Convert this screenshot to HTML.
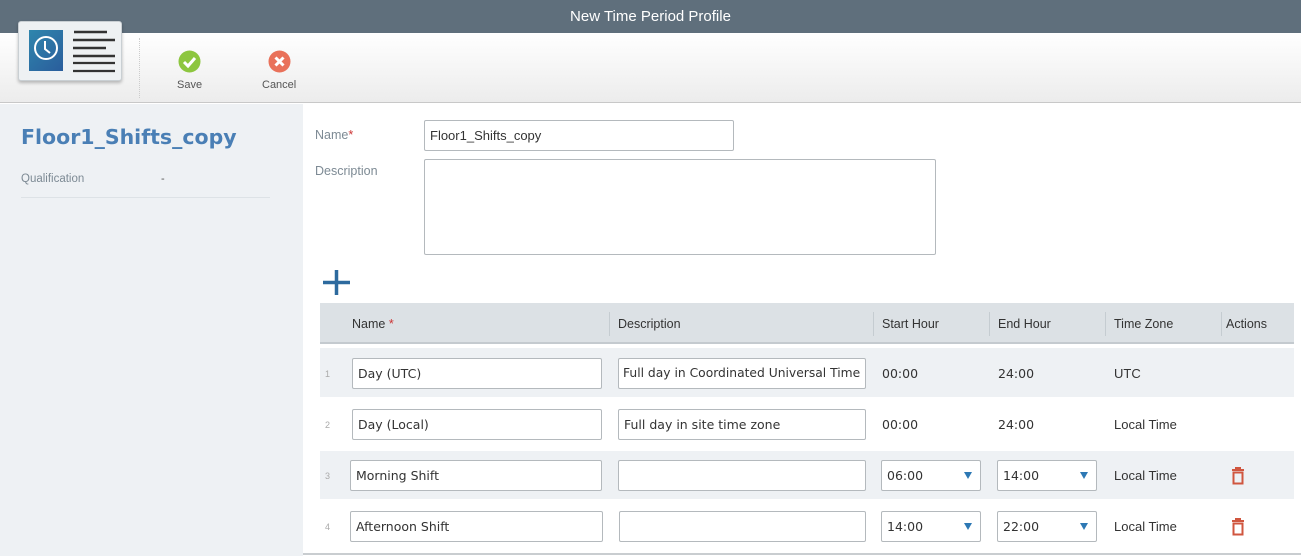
<!DOCTYPE html>
<html><head><style>
*{box-sizing:border-box;margin:0;padding:0}
body{width:1301px;height:556px;overflow:hidden;font-family:"Liberation Sans",Tahoma,sans-serif;background:#fff;position:relative}
.abs{position:absolute}
.title{left:0;top:0;width:1301px;height:33px;background:#5f6f7c;color:#fff;font-size:15px;text-align:center;line-height:33px}
.tb{left:0;top:33px;width:1301px;height:70px;background:linear-gradient(#fff,#ececec);border-bottom:1px solid #c8c8c8}
.left{left:0;top:104px;width:303px;height:452px;background:#eef1f4}
.inp{position:absolute;background:#fff;border:1px solid #b4b9bd;border-radius:2px;font-family:"DejaVu Sans",sans-serif;font-size:12.5px;color:#333;padding-left:5px;line-height:29px;white-space:nowrap;overflow:hidden}
.lbl{position:absolute;font-size:12.5px;color:#7d8a94}
.hdr{position:absolute;font-size:12.5px;color:#333}
.sep{position:absolute;top:312px;width:1px;height:24px;background:#c5ccd1}
.cell{position:absolute;font-family:"DejaVu Sans",sans-serif;font-size:12.5px;color:#333}
.tz{position:absolute;font-size:13px;color:#333}
.num{position:absolute;left:325px;font-size:9px;color:#aaa}
.arr{position:absolute;right:8px;top:11px;width:0;height:0;border-left:4px solid transparent;border-right:4px solid transparent;border-top:7px solid #2d78b4}
</style></head><body>
<div class="abs title">New Time Period Profile</div>
<div class="abs tb"></div>
<div class="abs" style="left:18px;top:21px;width:104px;height:60px;background:#eef1f3;border:1px solid #c9cfd3;border-radius:3px;box-shadow:0 2px 3px rgba(0,0,0,.25)">
 <div class="abs" style="left:10px;top:8px;width:34px;height:41px;background:linear-gradient(135deg,#2f86ad,#2a5d9c)"></div>
 <svg class="abs" style="left:10px;top:8px" width="34" height="41"><circle cx="17" cy="18" r="11" fill="none" stroke="#fff" stroke-width="2"/><path d="M16 11v8l5 4" stroke="#fff" stroke-width="2" fill="none"/></svg>
 <svg class="abs" style="left:52px;top:8px" width="44" height="44"><g stroke="#333" stroke-width="2.4"><path d="M3 2h33M2 10h42M2 18h33M2 26h42"/></g><path d="M2 33h42M2 41h42" stroke="#333" stroke-width="2.2"/></svg>
</div>
<div class="abs" style="left:139px;top:38px;width:1px;height:60px;border-left:1px dotted #ccc"></div>
<svg class="abs" style="left:178px;top:50px" width="23" height="23"><circle cx="11.5" cy="11.5" r="11" fill="#8dc63f"/><path d="M6 12l4 4 7-8" stroke="#fff" stroke-width="3" fill="none"/></svg>
<div class="abs" style="left:177px;top:79px;font-size:11px;color:#555">Save</div>
<svg class="abs" style="left:268px;top:50px" width="23" height="23"><circle cx="11.5" cy="11.5" r="11" fill="#e9715a"/><path d="M7.5 7.5l8 8M15.5 7.5l-8 8" stroke="#fff" stroke-width="3"/></svg>
<div class="abs" style="left:262px;top:79px;font-size:11px;color:#555">Cancel</div>
<div class="abs left"></div>
<div class="abs" style="left:21px;top:125px;font-family:'DejaVu Sans',sans-serif;font-weight:bold;font-size:20.5px;color:#4a7fb5">Floor1_Shifts_copy</div>
<div class="lbl" style="left:21px;top:173px;font-size:11.5px">Qualification</div>
<div class="abs" style="left:161px;top:173px;font-size:11px;color:#555">-</div>
<div class="abs" style="left:21px;top:197px;width:249px;height:1px;background:#dde2e6"></div>
<div class="lbl" style="left:315px;top:128px">Name<span style="color:#c33">*</span></div>
<div class="inp" style="left:424px;top:120px;width:310px;height:31px;line-height:29px;font-family:'Liberation Sans',sans-serif;font-size:13px">Floor1_Shifts_copy</div>
<div class="lbl" style="left:315px;top:164px">Description</div>
<div class="inp" style="left:424px;top:159px;width:512px;height:96px"></div>
<svg class="abs" style="left:323px;top:270px" width="27" height="25"><path d="M13.5 0v25M0 12.5h27" stroke="#2d6a9e" stroke-width="3.5"/></svg>
<div class="abs" style="left:320px;top:303px;width:974px;height:41px;background:#dce1e5;border-bottom:2px solid #c4cacf"></div>
<div class="hdr" style="left:352px;top:317px">Name <span style="color:#c33">*</span></div>
<div class="sep" style="left:609px"></div><div class="hdr" style="left:618px;top:317px">Description</div>
<div class="sep" style="left:873px"></div><div class="hdr" style="left:882px;top:317px">Start Hour</div>
<div class="sep" style="left:989px"></div><div class="hdr" style="left:998px;top:317px">End Hour</div>
<div class="sep" style="left:1105px"></div><div class="hdr" style="left:1114px;top:317px">Time Zone</div>
<div class="sep" style="left:1221px"></div><div class="hdr" style="left:1226px;top:317px">Actions</div>
<div class="abs" style="left:320px;top:348px;width:974px;height:49px;background:#eef1f4"></div>
<div class="abs" style="left:320px;top:451px;width:974px;height:48px;background:#eef1f4"></div>
<div class="abs" style="left:303px;top:553px;width:998px;height:2px;background:#c9cdd0"></div>
<div class="num" style="top:369px">1</div><div class="num" style="top:420px">2</div><div class="num" style="top:471px">3</div><div class="num" style="top:522px">4</div>
<div class="inp" style="left:352px;top:358px;width:250px;height:31px">Day (UTC)</div>
<div class="inp" style="left:618px;top:358px;width:248px;height:31px;font-size:12.3px;padding-left:4px">Full day in Coordinated Universal Time</div>
<div class="cell" style="left:882px;top:366px">00:00</div><div class="cell" style="left:998px;top:366px">24:00</div><div class="tz" style="left:1114px;top:366px">UTC</div>
<div class="inp" style="left:352px;top:409px;width:250px;height:31px">Day (Local)</div>
<div class="inp" style="left:618px;top:409px;width:248px;height:31px">Full day in site time zone</div>
<div class="cell" style="left:882px;top:417px">00:00</div><div class="cell" style="left:998px;top:417px">24:00</div><div class="tz" style="left:1114px;top:417px">Local Time</div>
<div class="inp" style="left:350px;top:460px;width:252px;height:31px">Morning Shift</div>
<div class="inp" style="left:618px;top:460px;width:248px;height:31px"></div>
<div class="inp" style="left:881px;top:460px;width:100px;height:31px">06:00<div class="arr"></div></div>
<div class="inp" style="left:997px;top:460px;width:100px;height:31px">14:00<div class="arr"></div></div>
<div class="tz" style="left:1114px;top:468px">Local Time</div>
<div class="inp" style="left:350px;top:511px;width:253px;height:31px">Afternoon Shift</div>
<div class="inp" style="left:619px;top:511px;width:247px;height:31px"></div>
<div class="inp" style="left:881px;top:511px;width:100px;height:31px">14:00<div class="arr"></div></div>
<div class="inp" style="left:997px;top:511px;width:100px;height:31px">22:00<div class="arr"></div></div>
<div class="tz" style="left:1114px;top:519px">Local Time</div>
<svg class="abs" style="left:1231px;top:467px" width="14" height="18"><path d="M1 3h12M5 3V1h4v2M2.5 5.5h9v11h-9z" stroke="#d0563f" stroke-width="2" fill="none"/></svg>
<svg class="abs" style="left:1231px;top:518px" width="14" height="18"><path d="M1 3h12M5 3V1h4v2M2.5 5.5h9v11h-9z" stroke="#d0563f" stroke-width="2" fill="none"/></svg>
</body></html>
